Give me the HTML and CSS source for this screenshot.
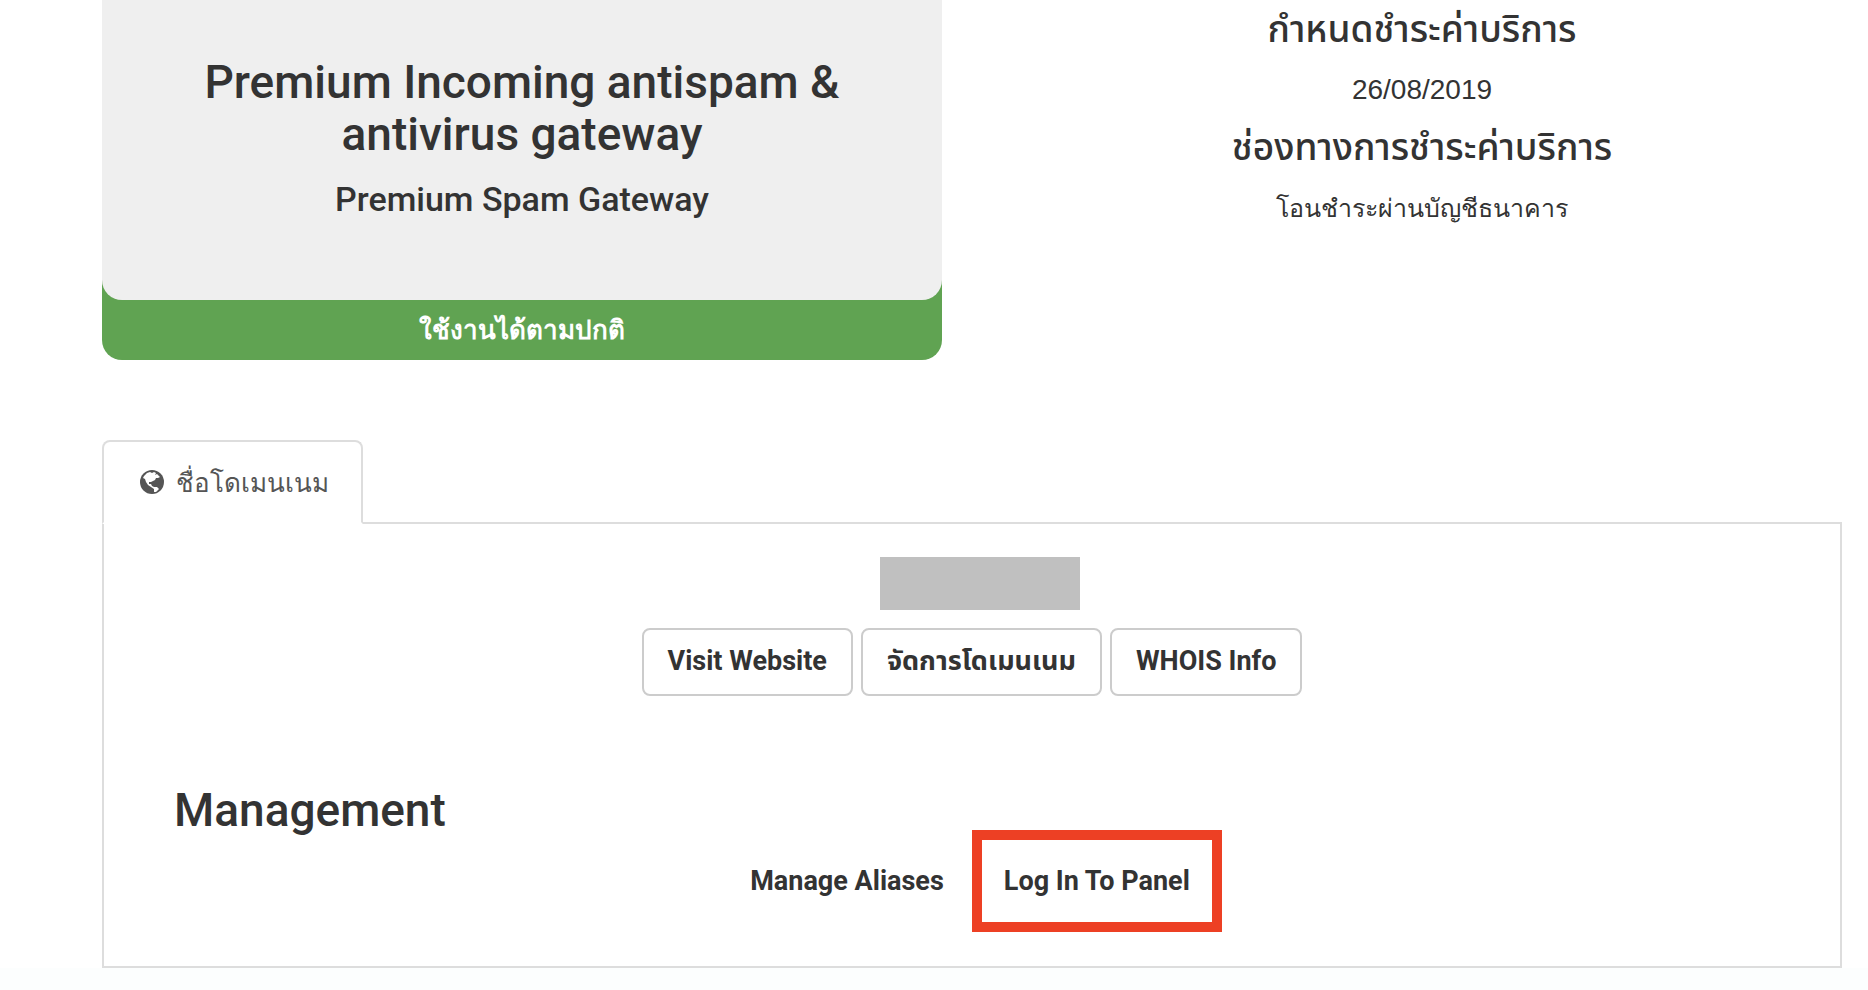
FILE: index.html
```html
<!DOCTYPE html>
<html lang="th">
<head>
<meta charset="utf-8">
<title>Premium Spam Gateway</title>
<link rel="stylesheet" href="styles.css">
</head>
<body>
<main class="page">
  <section class="overview">
    <div class="product">
      <div class="product-body">
        <h1 class="product-name">Premium Incoming antispam &amp; antivirus gateway</h1>
        <h2 class="product-group">Premium Spam Gateway</h2>
      </div>
      <div class="product-status">ใช้งานได้ตามปกติ</div>
    </div>
    <dl class="billing">
      <dt>กำหนดชำระค่าบริการ</dt>
      <dd class="date">26/08/2019</dd>
      <dt>ช่องทางการชำระค่าบริการ</dt>
      <dd>โอนชำระผ่านบัญชีธนาคาร</dd>
    </dl>
  </section>

  <section class="details">
    <nav class="tabs">
      <a class="tab" href="#domain">
        <svg class="globe" viewBox="0 0 24 24" aria-hidden="true">
          <circle cx="12" cy="12" r="12" fill="#555"/>
          <path fill="#fff" d="M4 6 7 3 10 2 12 3 14 2 16 3 15 5 17 4 20 7 18 8 16 8 15 10 13 11 11 12 9 12 9 14 11 14 12 16 14 17 17 17 19 19 16 22 14 22 14 19 11 17 8 15 6 12 5 9 3 8Z"/>
        </svg>
        <span>ชื่อโดเมนเนม</span>
      </a>
    </nav>
    <div class="panel" id="domain">
      <div class="domain">
        <div class="domain-name"></div>
      </div>
      <div class="actions">
        <button class="btn" type="button">Visit Website</button>
        <button class="btn" type="button">จัดการโดเมนเนม</button>
        <button class="btn" type="button">WHOIS Info</button>
      </div>
      <h2 class="panel-title">Management</h2>
      <div class="links">
        <a class="link" href="#aliases">Manage Aliases</a>
        <a class="link highlighted" href="#login">Log In To Panel</a>
      </div>
    </div>
  </section>
</main>
</body>
</html>
```
FILE: styles.css
```css
* { box-sizing: border-box; }
body {
  margin: 0;
  background: #fcfefe;
  color: #333;
  font-family: "Liberation Sans", sans-serif;
  font-size: 26px;
}
h1, h2, dl, dd { margin: 0; }
.page {
  padding: 0 26px 0 102px;
  background: #fff;
}
.overview {
  display: grid;
  grid-template-columns: 1fr 1fr;
  gap: 60px;
}
.product {
  background: #60a352;
  border-radius: 0 0 20px 20px;
  text-align: center;
}
.product-body {
  padding: 56px 80px 82px;
  background: #efefef;
  border-radius: 0 0 20px 20px;
}
.product-name, .product-group, .panel-title {
  font-family: Roboto, "Noto Sans Thai", sans-serif;
  font-weight: 500;
}
.product-name { font-size: 46px; line-height: 52px; }
.product-group {
  margin-top: 20px;
  font-size: 34px;
  line-height: 38px;
}
.product-status {
  color: #fff;
  font-weight: 700;
  line-height: 60px;
}
.billing { text-align: center; }
.billing dt {
  padding-top: 2px;
  font-family: "Noto Sans Thai", sans-serif;
  font-size: 37px;
  font-weight: 500;
  line-height: 58px;
}
.billing dd {
  padding-top: 2px;
  font-size: 25px;
  line-height: 56px;
}
.billing .date { font-size: 28px; }
.details { margin-top: 80px; }
.tabs { display: flex; }
.tab {
  position: relative;
  display: flex;
  align-items: center;
  gap: 12px;
  height: 84px;
  margin-bottom: -2px;
  padding: 0 32px 0 36px;
  border: 2px solid #ddd;
  border-bottom-color: #fff;
  border-radius: 8px 8px 0 0;
  background: #fff;
  color: #555;
  text-decoration: none;
}
.globe { width: 24px; height: 24px; }
.panel {
  padding: 33px 70px 34px;
  border: 2px solid #ddd;
}
.domain {
  display: flex;
  justify-content: center;
  padding-left: 16px;
}
.domain-name {
  width: 200px;
  height: 53px;
  background: #c0c0c0;
}
.actions {
  display: flex;
  justify-content: center;
  gap: 8px;
  margin-top: 18px;
}
.btn {
  height: 68px;
  padding: 0 24px 2px;
  border: 2px solid #ccc;
  border-radius: 8px;
  background: #fff;
  color: #333;
  font: 700 27px/40px Roboto, "Noto Sans Thai", sans-serif;
}
.panel-title {
  margin-top: 94px;
  font-size: 46px;
  line-height: 40px;
}
.links {
  display: flex;
  justify-content: center;
  align-items: center;
}
.link {
  padding: 0 28px;
  color: #333;
  font: 700 27px/40px Roboto, sans-serif;
  text-decoration: none;
}
.highlighted {
  padding: 21px 22px;
  border: 10px solid #ed4024;
}
```
